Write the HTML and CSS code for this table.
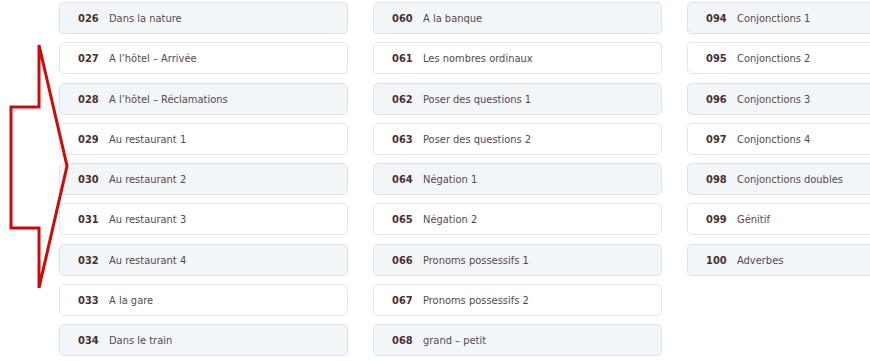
FILE: index.html
```html
<!DOCTYPE html>
<html lang="fr">
<head>
<meta charset="utf-8">
<title>Leçons</title>
<link rel="stylesheet" href="styles.css">
</head>
<body>
<div class="page">
  <div class="grid">
    <div class="col">
      <a class="item shaded"><span class="num">026</span><span class="title">Dans la nature</span></a>
      <a class="item"><span class="num">027</span><span class="title">A l’hôtel – Arrivée</span></a>
      <a class="item shaded"><span class="num">028</span><span class="title">A l’hôtel – Réclamations</span></a>
      <a class="item"><span class="num">029</span><span class="title">Au restaurant 1</span></a>
      <a class="item shaded"><span class="num">030</span><span class="title">Au restaurant 2</span></a>
      <a class="item"><span class="num">031</span><span class="title">Au restaurant 3</span></a>
      <a class="item shaded"><span class="num">032</span><span class="title">Au restaurant 4</span></a>
      <a class="item"><span class="num">033</span><span class="title">A la gare</span></a>
      <a class="item shaded"><span class="num">034</span><span class="title">Dans le train</span></a>
    </div>
    <div class="col">
      <a class="item shaded"><span class="num">060</span><span class="title">A la banque</span></a>
      <a class="item"><span class="num">061</span><span class="title">Les nombres ordinaux</span></a>
      <a class="item shaded"><span class="num">062</span><span class="title">Poser des questions 1</span></a>
      <a class="item"><span class="num">063</span><span class="title">Poser des questions 2</span></a>
      <a class="item shaded"><span class="num">064</span><span class="title">Négation 1</span></a>
      <a class="item"><span class="num">065</span><span class="title">Négation 2</span></a>
      <a class="item shaded"><span class="num">066</span><span class="title">Pronoms possessifs 1</span></a>
      <a class="item"><span class="num">067</span><span class="title">Pronoms possessifs 2</span></a>
      <a class="item shaded"><span class="num">068</span><span class="title">grand – petit</span></a>
    </div>
    <div class="col">
      <a class="item shaded"><span class="num">094</span><span class="title">Conjonctions 1</span></a>
      <a class="item"><span class="num">095</span><span class="title">Conjonctions 2</span></a>
      <a class="item shaded"><span class="num">096</span><span class="title">Conjonctions 3</span></a>
      <a class="item"><span class="num">097</span><span class="title">Conjonctions 4</span></a>
      <a class="item shaded"><span class="num">098</span><span class="title">Conjonctions doubles</span></a>
      <a class="item"><span class="num">099</span><span class="title">Génitif</span></a>
      <a class="item shaded"><span class="num">100</span><span class="title">Adverbes</span></a>
    </div>
  </div>
  <svg class="arrow" width="80" height="300" viewBox="0 0 80 300" aria-hidden="true">
    <polygon points="39,45 39,107 11,107 11,228 39,228 39,288 67,166" fill="none" stroke="#cc0a0a" stroke-width="3" stroke-linejoin="miter"/>
  </svg>
</div>
</body>
</html>
```
FILE: styles.css
```css
html, body {
  margin: 0;
  padding: 0;
  background: #ffffff;
  overflow: hidden;
}

.page {
  position: relative;
  width: 870px;
  height: 361px;
  overflow: hidden;
  font-family: "DejaVu Sans", "Liberation Sans", sans-serif;
  font-stretch: condensed;
  font-size: 11px;
}

.grid {
  display: flex;
  gap: 25px;
  padding: 2px 0 0 59px;
  width: max-content;
}

.col {
  display: flex;
  flex-direction: column;
  gap: 8.25px;
  width: 289px;
}

.item {
  display: flex;
  align-items: center;
  box-sizing: border-box;
  height: 32px;
  padding: 1px 0 0 18px;
  border: 1px solid #e2e6ea;
  border-radius: 5px;
  background: #ffffff;
  text-decoration: none;
}

.item.shaded {
  background: #f3f6f9;
  border-color: #dde2e8;
}

.num {
  font-weight: bold;
  color: #4b2f2f;
  width: 31px;
  flex: none;
}

.title {
  color: #574848;
  white-space: nowrap;
}

.arrow {
  position: absolute;
  left: 0;
  top: 0;
}
```
